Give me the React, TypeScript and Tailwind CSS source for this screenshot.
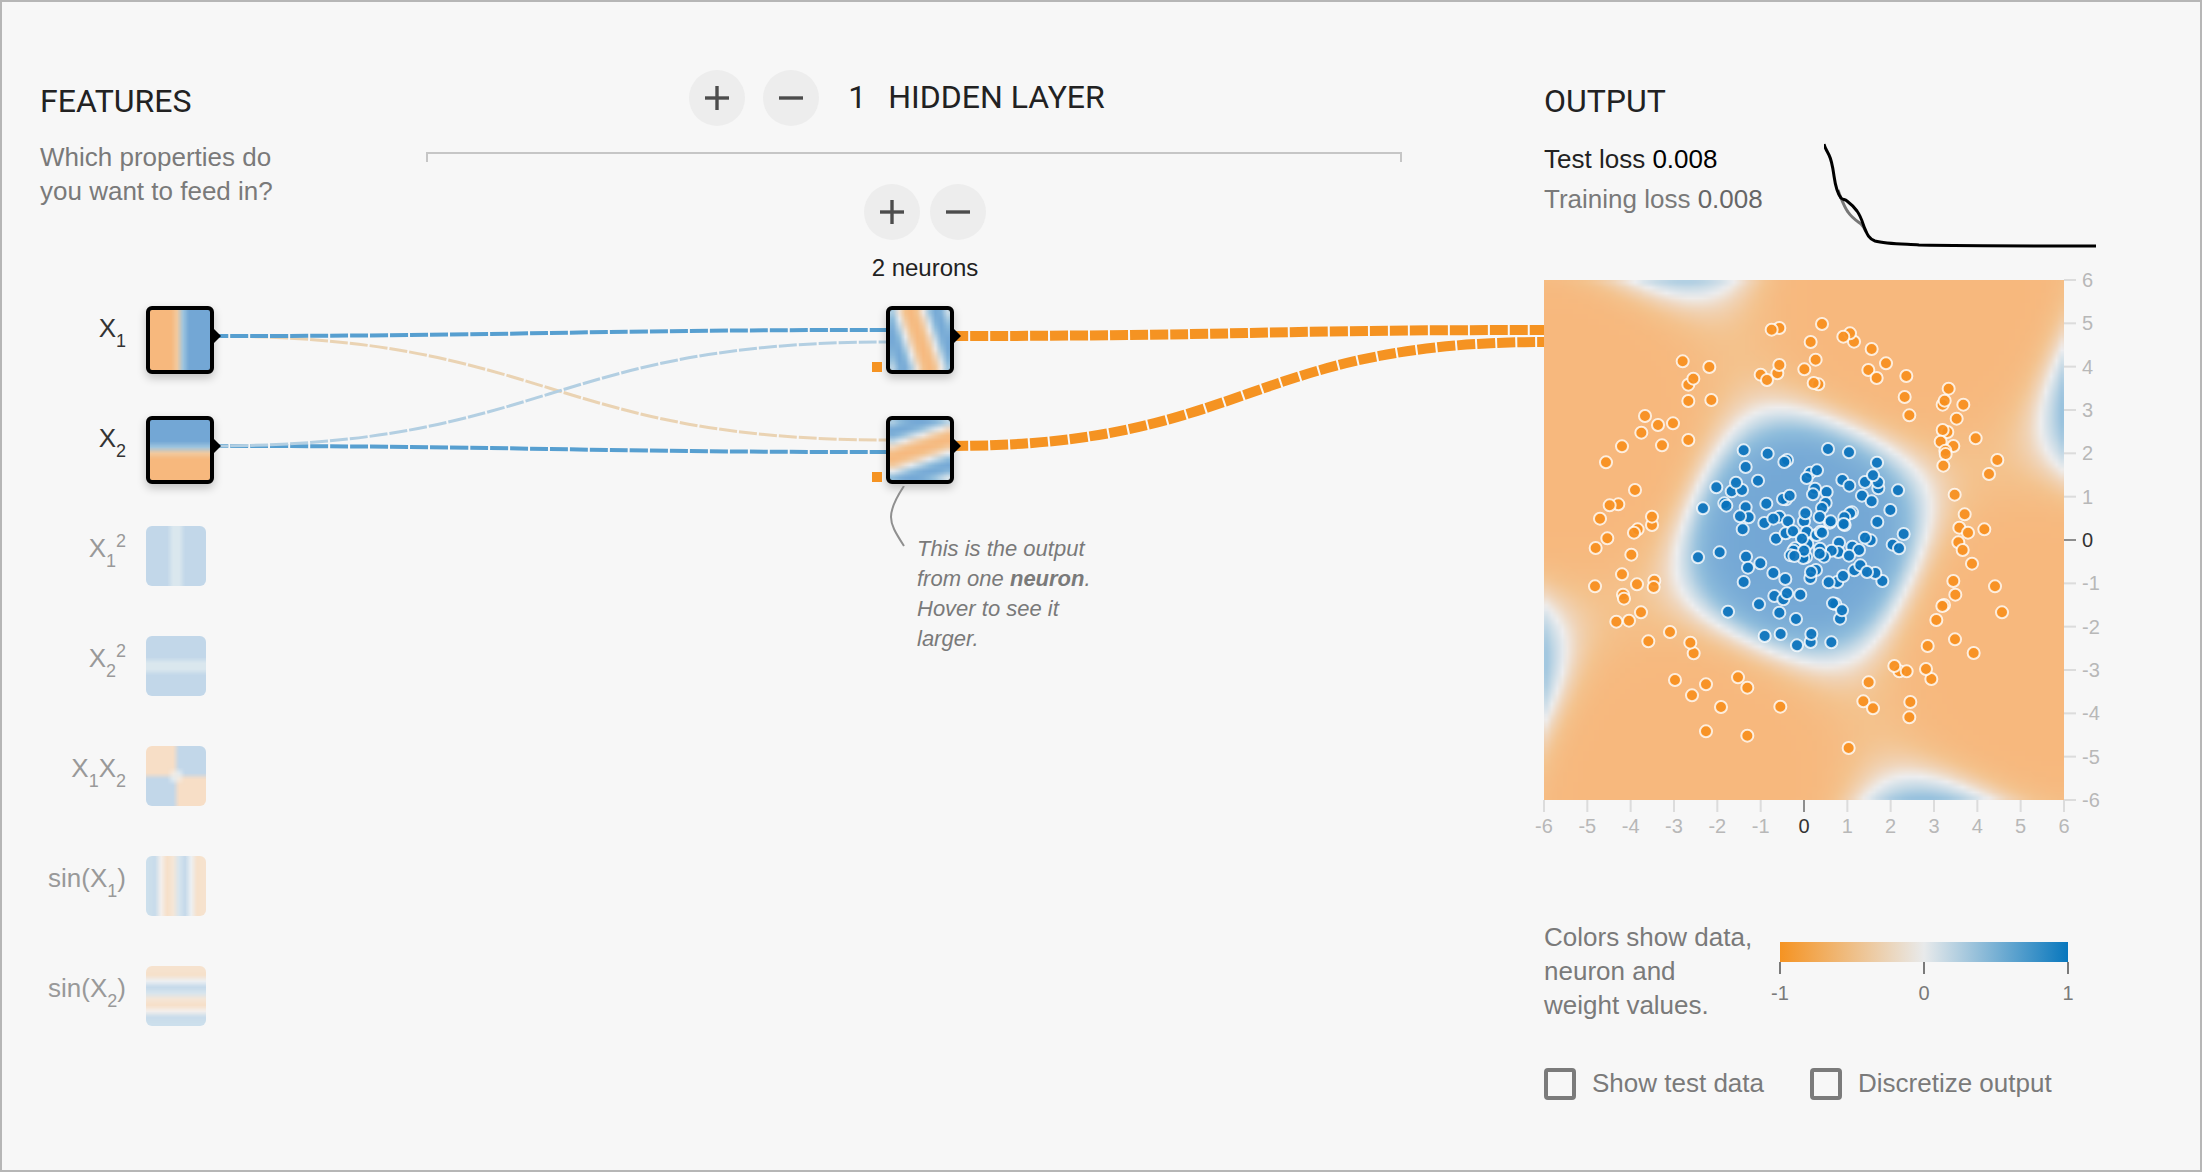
import { useLayoutEffect, useRef, useState } from "react";
import type { ReactNode } from "react";

type Field = (x: number, y: number) => number;
type Point = [number, number];

const EXTENT = 6;
const DENSITY = 100;

/* Periodic responses of the two hidden units, and of the output unit. */
const hidden1: Field = (x, y) => -Math.cos(0.6 * (x + 0.33 * y + 0.07));
const hidden2: Field = (x, y) => -Math.cos(0.6 * (y - 0.33 * x - 0.3));
const output: Field = (x, y) => {
  const u = 0.655 * (x + 0.36 * y);
  const v = 0.65 * (y - 0.385 * x - 0.09);
  return Math.tanh(2.2 * (Math.cos(u) + Math.cos(v) - 0.47));
};

const RAMP: [number, number, number, number][] = [
  [-1, 247, 184, 125],
  [-0.75, 244, 195, 142],
  [-0.35, 240, 214, 188],
  [0, 238, 238, 239],
  [0.35, 196, 217, 230],
  [0.7, 143, 189, 220],
  [1, 115, 167, 213],
];

function shade(value: number): [number, number, number] {
  const v = Math.max(-1, Math.min(1, value));
  for (let i = 1; i < RAMP.length; i++) {
    const a = RAMP[i - 1];
    const b = RAMP[i];
    if (v <= b[0]) {
      const t = (v - a[0]) / (b[0] - a[0]);
      return [a[1] + t * (b[1] - a[1]), a[2] + t * (b[2] - a[2]), a[3] + t * (b[3] - a[3])];
    }
  }
  return [115, 167, 213];
}

/* Samples the field on a fine grid and averages it down to size x size cells. */
function HeatMap({ field, size, className }: { field: Field; size: number; className: string }) {
  const ref = useRef<HTMLCanvasElement>(null);
  useLayoutEffect(() => {
    const ctx = ref.current?.getContext("2d");
    if (!ctx) return;
    const image = ctx.createImageData(size, size);
    const block = DENSITY / size;
    const toAxis = (i: number) => -EXTENT + (2 * EXTENT * (i + 0.5)) / DENSITY;
    for (let row = 0; row < size; row++) {
      for (let col = 0; col < size; col++) {
        let sum = 0;
        for (let j = 0; j < block; j++) {
          for (let i = 0; i < block; i++) {
            sum += field(toAxis(col * block + i), -toAxis(row * block + j));
          }
        }
        const [r, g, b] = shade(sum / (block * block));
        const at = (row * size + col) * 4;
        image.data[at] = r;
        image.data[at + 1] = g;
        image.data[at + 2] = b;
        image.data[at + 3] = 255;
      }
    }
    ctx.putImageData(image, 0, 0);
  }, [field, size]);
  return <canvas ref={ref} width={size} height={size} className={className} />;
}

function Sub({ children }: { children: ReactNode }) {
  return <sub className="static align-[-10px] text-[18px] leading-none">{children}</sub>;
}

function Sup({ children }: { children: ReactNode }) {
  return <sup className="static align-[10px] text-[18px] leading-none">{children}</sup>;
}

const features: { id: string; label: ReactNode; field: Field; active: boolean }[] = [
  { id: "x1", label: <>X<Sub>1</Sub></>, field: (x) => x, active: true },
  { id: "x2", label: <>X<Sub>2</Sub></>, field: (_x, y) => y, active: true },
  { id: "x1sq", label: <>X<Sub>1</Sub><Sup>2</Sup></>, field: (x) => x * x, active: false },
  { id: "x2sq", label: <>X<Sub>2</Sub><Sup>2</Sup></>, field: (_x, y) => y * y, active: false },
  { id: "x1x2", label: <>X<Sub>1</Sub>X<Sub>2</Sub></>, field: (x, y) => x * y, active: false },
  { id: "sinx1", label: <>sin(X<Sub>1</Sub>)</>, field: (x) => Math.sin(x), active: false },
  { id: "sinx2", label: <>sin(X<Sub>2</Sub>)</>, field: (_x, y) => Math.sin(y), active: false },
];

function Node({ field, name, labelledBy }: { field: Field; name?: string; labelledBy?: string }) {
  return (
    <button
      type="button"
      aria-label={name}
      aria-labelledby={labelledBy}
      className="relative block size-[68px] shrink-0 rounded-md border-4 border-black bg-black shadow-[0_4px_10px_rgba(0,0,0,0.22)]"
    >
      <HeatMap field={field} size={10} className="block size-full rounded-xs" />
      <svg viewBox="0 0 8 16" className="absolute top-[18px] left-[63px] h-4 w-2" aria-hidden="true">
        <path d="M0 0L8 8L0 16Z" fill="#000" />
      </svg>
    </button>
  );
}

function RoundButton({ kind, name }: { kind: "plus" | "minus"; name: string }) {
  return (
    <button
      type="button"
      aria-label={name}
      className="flex size-14 items-center justify-center rounded-full bg-[#ededed] hover:bg-[#e2e2e2]"
    >
      <svg viewBox="0 0 24 24" className="size-6" stroke="#4c4c4c" strokeWidth="3.4" aria-hidden="true">
        <path d="M0 12H24" />
        {kind === "plus" && <path d="M12 0V24" />}
      </svg>
    </button>
  );
}

function link(x0: number, y0: number, x1: number, y1: number) {
  const mid = (x0 + x1) / 2;
  return `M${x0} ${y0}C${mid} ${y0} ${mid} ${y1} ${x1} ${y1}`;
}

/* Sample positions on the plot, 130 units to one axis unit, origin top left. */
const orange: Point[] = [
  [706, 144], [683, 149], [800, 186], [834, 132], [815, 239], [781, 268], [823, 313], [809, 309],
  [650, 284], [700, 280], [669, 300], [706, 255], [416, 244], [496, 261], [433, 314], [448, 296],
  [433, 363], [502, 360], [303, 408], [342, 435], [387, 430], [292, 458], [354, 496], [433, 480],
  [234, 499], [186, 547], [273, 630], [223, 673], [197, 676], [168, 716], [324, 735], [324, 710],
  [281, 748], [270, 758], [190, 775], [155, 804], [262, 824], [930, 185], [918, 160], [898, 170],
  [983, 207], [1026, 250], [973, 270], [998, 294], [1087, 288], [1082, 351], [1096, 406],
  [1214, 326], [1196, 374], [1202, 362], [1258, 374], [1238, 416], [1210, 456], [1196, 450],
  [1190, 485], [1228, 498], [1204, 512], [1205, 522], [1198, 557], [1295, 475], [1360, 540],
  [1335, 582], [1232, 644], [1262, 703], [1246, 743], [1272, 758], [1321, 748], [1243, 787],
  [1256, 810], [234, 883], [153, 919], [279, 913], [331, 902], [329, 921], [237, 944], [240, 956],
  [291, 997], [217, 1025], [255, 1022], [378, 1056], [313, 1084], [449, 1120], [439, 1088],
  [393, 1200], [486, 1213], [444, 1246], [531, 1281], [582, 1192], [610, 1223], [486, 1354],
  [610, 1367], [709, 1280], [1284, 851], [1228, 903], [1353, 919], [1234, 944], [1200, 975],
  [1195, 978], [1177, 1020], [1374, 997], [1151, 1098], [1233, 1078], [1289, 1119], [1066, 1174],
  [1051, 1158], [1088, 1174], [1162, 1197], [1146, 1167], [974, 1207], [958, 1264], [987, 1285],
  [1099, 1266], [1096, 1312], [914, 1404],
];

const blue: Point[] = [
  [599, 511], [671, 521], [729, 540], [721, 546], [605, 561], [852, 507], [915, 517], [999, 548],
  [799, 578], [819, 571], [788, 594], [517, 622], [563, 634], [594, 630], [576, 608], [642, 602],
  [895, 600], [916, 617], [963, 606], [1003, 625], [1002, 607], [987, 586], [1062, 631],
  [954, 647], [983, 664], [813, 626], [848, 636], [807, 643], [477, 685], [541, 670], [547, 677],
  [605, 682], [667, 671], [726, 658], [717, 657], [737, 647], [845, 669], [834, 684], [1039, 690],
  [614, 712], [588, 709], [596, 748], [661, 729], [706, 710], [688, 716], [732, 724], [780, 724],
  [784, 700], [827, 711], [858, 728], [860, 724], [924, 697], [918, 700], [901, 712], [902, 735],
  [899, 732], [1000, 726], [1079, 762], [1046, 794], [1065, 805], [696, 776], [725, 760],
  [747, 754], [788, 756], [818, 765], [830, 755], [834, 758], [790, 792], [774, 776], [980, 781],
  [963, 773], [885, 788], [925, 800], [945, 810], [883, 816], [863, 812], [915, 827], [462, 832],
  [527, 817], [606, 830], [612, 863], [649, 850], [599, 906], [753, 805], [748, 812], [740, 826],
  [786, 831], [778, 834], [780, 812], [751, 828], [828, 806], [840, 830], [827, 821], [688, 879],
  [724, 897], [816, 870], [799, 894], [801, 876], [880, 906], [854, 907], [897, 888], [931, 871],
  [949, 856], [1015, 903], [994, 879], [969, 876], [691, 948], [718, 958], [729, 940], [769, 944],
  [645, 973], [552, 995], [706, 998], [756, 1017], [662, 1068], [710, 1062], [759, 1096],
  [800, 1086], [802, 1062], [862, 1087], [874, 972], [867, 970], [888, 1016], [894, 991],
];

const axis = [-6, -5, -4, -3, -2, -1, 0, 1, 2, 3, 4, 5, 6];

function Dots({ points, fill }: { points: Point[]; fill: string }) {
  return (
    <g fill={fill} stroke="#fff" strokeWidth="6" fillOpacity="0.92" strokeOpacity="0.8">
      {points.map(([x, y], i) => (
        <circle key={i} cx={x} cy={y} r="18" />
      ))}
    </g>
  );
}

function Plot() {
  return (
    <div className="mt-8 grid w-[580px] grid-cols-[520px_60px]">
      <div className="relative size-[520px]">
        <HeatMap field={output} size={100} className="block size-full" />
        <svg viewBox="0 0 1560 1560" className="absolute inset-0 size-full" role="img" aria-label="Training data">
          <Dots points={orange} fill="#f78f1e" />
          <Dots points={blue} fill="#0a72bc" />
        </svg>
      </div>
      <svg viewBox="0 0 60 520" className="h-[520px] w-[60px] overflow-visible text-[20px]">
        {axis.map((n) => (
          <g key={n}>
            <path
              d={`M0 ${260 - (n * 260) / 6}h12`}
              stroke={n === 0 ? "#8e8e8e" : "#dcdcdc"}
              strokeWidth="2"
            />
            <text x="18" y={267 - (n * 260) / 6} fill={n === 0 ? "#333" : "#b8b8b8"}>
              {n}
            </text>
          </g>
        ))}
      </svg>
      <svg viewBox="0 0 520 40" className="h-10 w-[520px] overflow-visible text-[20px]">
        {axis.map((n) => (
          <g key={n}>
            <path
              d={`M${260 + (n * 260) / 6} 0v12`}
              stroke={n === 0 ? "#8e8e8e" : "#dcdcdc"}
              strokeWidth="2"
            />
            <text x={260 + (n * 260) / 6} y="33" textAnchor="middle" fill={n === 0 ? "#333" : "#b8b8b8"}>
              {n}
            </text>
          </g>
        ))}
      </svg>
    </div>
  );
}

function LossChart() {
  return (
    <svg viewBox="0 0 272 109" className="h-[109px] w-[272px]" fill="none" strokeWidth="3" role="img" aria-label="Loss over time">
      <path
        d="M14 51C15 54 16 57 17 59C19 64 21 69 24 73C28 79 33 82 37 85C40 88 41 90 42 93"
        stroke="#777"
      />
      <path
        d="M0 5C1 9 3 12 5 16C8 22 9 30 10 37C11 44 13 54 17 59C19 61 21 60 23 62C27 65 30 68 33 72C38 79 39 86 41 90C43 95 45 100 51 102C62 105 80 105 95 106C150 107 210 107 272 107"
        stroke="#000"
      />
    </svg>
  );
}

function Check({ id, children }: { id: string; children: ReactNode }) {
  const [on, setOn] = useState(false);
  return (
    <div className="flex items-start gap-4">
      <input
        id={id}
        type="checkbox"
        checked={on}
        onChange={(e) => setOn(e.target.checked)}
        className="size-8 appearance-none rounded border-4 border-[#7b7b7b] checked:bg-[#7b7b7b]"
      />
      <label htmlFor={id}>{children}</label>
    </div>
  );
}

export default function App() {
  return (
    <main className="flex min-h-screen w-full border-2 border-[#b6b6b6] bg-[#f7f7f7] pl-[38px] font-['Liberation_Sans',Arial,sans-serif] text-[26px] text-[#7a7a7a]">
      <section className="relative z-10 w-[174px] shrink-0 pt-[78px]">
        <h2 className="font-[Roboto,sans-serif] text-[32px] leading-[42px] text-[#222]">FEATURES</h2>
        <p className="mt-[18px] leading-[34px] whitespace-nowrap">
          Which properties do
          <br />
          you want to feed in?
        </p>
        <ul className="mt-[98px]">
          {features.map((f) => (
            <li key={f.id} className="flex h-[110px] items-start">
              <span
                id={f.id}
                className={
                  f.active
                    ? "flex-1 pt-1.5 pr-5 text-right leading-8 whitespace-nowrap text-[#333]"
                    : "flex-1 pt-1.5 pr-5 text-right leading-8 whitespace-nowrap text-[#999]"
                }
              >
                {f.label}
              </span>
              {f.active ? (
                <Node field={f.field} labelledBy={f.id} />
              ) : (
                <button type="button" aria-labelledby={f.id} className="mr-2 block size-[60px] shrink-0">
                  <HeatMap field={f.field} size={10} className="block size-full rounded-md opacity-40" />
                </button>
              )}
            </li>
          ))}
        </ul>
      </section>

      <section className="min-w-0 flex-1 pt-[68px]">
        <div className="flex items-center justify-center pl-9">
          <RoundButton kind="plus" name="Add hidden layer" />
          <span className="w-[18px]" />
          <RoundButton kind="minus" name="Remove hidden layer" />
          <h2 className="ml-[29px] flex gap-[22px] pb-0.5 font-[Roboto,sans-serif] text-[32px] leading-10 whitespace-nowrap text-[#222]">
            <span>1</span>
            <span>HIDDEN LAYER</span>
          </h2>
        </div>
        <div className="mt-[26px] mr-[142px] ml-[212px] h-[10px] border-x-2 border-t-2 border-[#c6c6c6]" />
        <div className="mt-[22px] flex flex-col items-center pl-[92px]">
          <div className="flex gap-[10px]">
            <RoundButton kind="plus" name="Add neuron" />
            <RoundButton kind="minus" name="Remove neuron" />
          </div>
          <p className="mt-3 text-[24px] leading-8 text-[#222]">2 neurons</p>
        </div>

        <div className="relative mt-[22px]">
          <svg
            viewBox="0 0 1330 180"
            preserveAspectRatio="none"
            className="absolute inset-x-0 top-0 h-[180px] w-full overflow-visible"
            fill="none"
            strokeDasharray="18 2"
            aria-hidden="true"
          >
            <path d={link(-4, 30, 674, 134)} stroke="#ead3b3" strokeWidth="3" />
            <path d={link(-4, 140, 674, 146)} stroke="#579fd0" strokeWidth="4" />
            <path d={link(-4, 140, 674, 36)} stroke="#b3cfe2" strokeWidth="3" />
            <path d={link(-4, 30, 674, 24)} stroke="#579fd0" strokeWidth="4" />
            <path d={link(736, 30, 1330, 24)} stroke="#f59322" strokeWidth="10" />
            <path d={link(736, 140, 1330, 36)} stroke="#f59322" strokeWidth="10" />
          </svg>
          <div className="flex flex-col items-center gap-[42px] pl-[82px]">
            <div className="relative">
              <Node field={hidden1} name="Neuron 1" />
              <span className="absolute top-14 -left-[14px] size-[10px] bg-[#f59322]" />
            </div>
            <div className="relative">
              <Node field={hidden2} name="Neuron 2" />
              <span className="absolute top-14 -left-[14px] size-[10px] bg-[#f59322]" />
              <div className="absolute top-[70px] left-1 flex gap-3">
                <svg viewBox="0 0 15 61" className="h-[61px] w-[15px]" fill="none" stroke="#8f8f8f" strokeWidth="2" aria-hidden="true">
                  <path d="M14 0C4 15 1 24 1 31C1 39 5 46 14 60" />
                </svg>
                <p className="pt-12 text-[22px] leading-[30px] whitespace-nowrap italic">
                  This is the output
                  <br />
                  from one <b>neuron</b>.
                  <br />
                  Hover to see it
                  <br />
                  larger.
                </p>
              </div>
            </div>
          </div>
        </div>
      </section>

      <section className="w-[656px] shrink-0 pt-[78px] pb-10">
        <h2 className="font-[Roboto,sans-serif] text-[32px] leading-[42px] text-[#222]">OUTPUT</h2>
        <div className="mt-[17px] flex">
          <div className="w-[280px] leading-10">
            <p className="text-[#222]">
              Test loss <span className="text-black">0.008</span>
            </p>
            <p>
              Training loss <span className="text-[#666]">0.008</span>
            </p>
          </div>
          <LossChart />
        </div>
        <Plot />
        <div className="mt-20 flex">
          <p className="w-[236px] leading-[34px] whitespace-nowrap">
            Colors show data,
            <br />
            neuron and
            <br />
            weight values.
          </p>
          <div className="mt-[22px] w-[288px]">
            <div className="h-5 bg-[linear-gradient(to_right,#f59322,#e8eaeb,#0877bd)]" />
            <svg viewBox="0 0 288 44" className="h-11 w-full overflow-visible text-[20px]" fill="#7a7a7a">
              {[-1, 0, 1].map((n) => (
                <g key={n}>
                  <path d={`M${144 + n * 144} 0v12`} stroke="#7a7a7a" strokeWidth="2" />
                  <text x={144 + n * 144} y="38" textAnchor="middle">
                    {n}
                  </text>
                </g>
              ))}
            </svg>
          </div>
        </div>
        <div className="mt-[46px] flex gap-[46px] leading-[30px]">
          <Check id="show-test-data">Show test data</Check>
          <Check id="discretize">Discretize output</Check>
        </div>
      </section>
    </main>
  );
}
